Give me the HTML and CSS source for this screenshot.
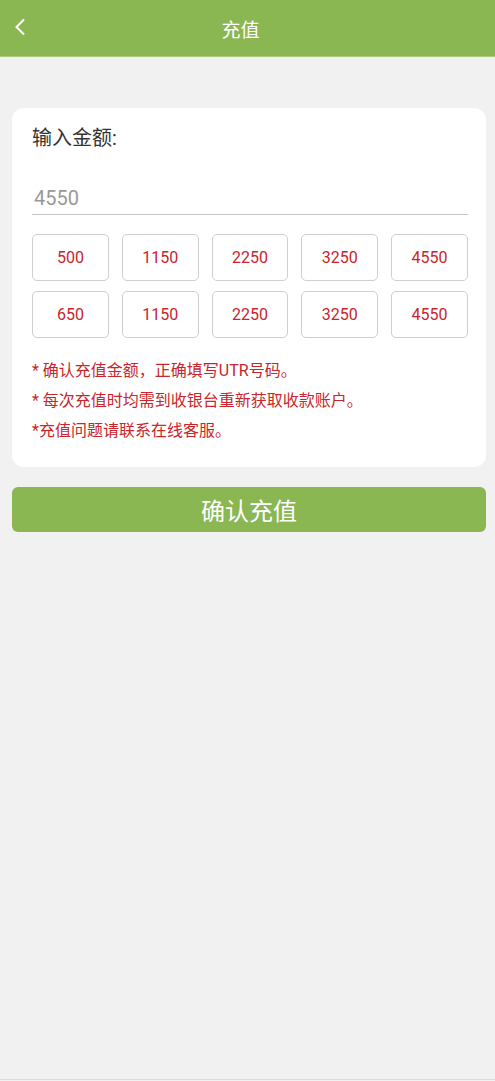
FILE: index.html
```html
<!DOCTYPE html>
<html lang="zh">
<head>
<meta charset="utf-8">
<link rel="stylesheet" href="styles.css">
</head>
<body>
<div class="page">
  <header class="topbar">
    <span class="back">
      <svg width="12" height="18" viewBox="0 0 12 18"><path d="M10 1.5 L2.5 9 L10 16.5" fill="none" stroke="#fff" stroke-width="2"/></svg>
    </span>
    <h1 class="title">充值</h1>
  </header>
  <main class="content">
    <section class="card">
      <div class="label">输入金额:</div>
      <div class="amount-input">4550</div>
      <div class="grid">
        <div class="opt">500</div>
        <div class="opt">1150</div>
        <div class="opt">2250</div>
        <div class="opt">3250</div>
        <div class="opt">4550</div>
        <div class="opt">650</div>
        <div class="opt">1150</div>
        <div class="opt">2250</div>
        <div class="opt">3250</div>
        <div class="opt">4550</div>
      </div>
      <div class="notes">
        <p>* 确认充值金额，正确填写UTR号码。</p>
        <p>* 每次充值时均需到收银台重新获取收款账户。</p>
        <p>*充值问题请联系在线客服。</p>
      </div>
    </section>
    <button class="submit">确认充值</button>
  </main>
</div>
</body>
</html>
```
FILE: styles.css
```css
html, body {
  margin: 0;
  padding: 0;
  background: #f1f1f1;
  font-family: Roboto, "Noto Sans CJK SC", sans-serif;
}
.page {
  min-height: 1080px;
  border-bottom: 1px solid #d6dde6;
  box-sizing: border-box;
}
.topbar {
  height: 56px;
  background: #8bb753;
  border-bottom: 1px solid #a9cc7e;
  display: flex;
  align-items: center;
  justify-content: center;
  padding-right: 14px;
  position: relative;
}
.back {
  position: absolute;
  left: 14px;
  top: 18px;
  display: flex;
}
.title {
  margin: 0;
  font-size: 19px;
  font-weight: 400;
  color: #fff;
}
.content {
  padding: 51px 9px 0 12px;
}
.card {
  background: #fff;
  border-radius: 12px;
  padding: 15px 18px 21px 20px;
}
.label {
  font-size: 20px;
  color: #333;
  line-height: 30px;
}
.amount-input {
  margin-top: 31px;
  font-size: 20px;
  color: #999;
  line-height: 28px;
  padding-left: 2px;
  padding-bottom: 2px;
  border-bottom: 1px solid #c4c4c4;
}
.grid {
  margin-top: 19px;
  display: grid;
  grid-template-columns: repeat(5, 1fr);
  column-gap: 13px;
  row-gap: 10px;
}
.opt {
  height: 47px;
  box-sizing: border-box;
  border: 1px solid #cfcfcf;
  border-radius: 5px;
  display: flex;
  align-items: center;
  justify-content: center;
  font-size: 16px;
  color: #c9252b;
}
.notes {
  margin-top: 18px;
}
.notes p {
  margin: 0;
  font-size: 16px;
  line-height: 30px;
  color: #c9252b;
}
.submit {
  display: block;
  width: 100%;
  margin-top: 20px;
  height: 45px;
  border: none;
  border-radius: 6px;
  background: #8bb753;
  color: #fff;
  font-family: Roboto, "Noto Sans CJK SC", sans-serif;
  font-size: 24px;
  padding: 0;
}
```
